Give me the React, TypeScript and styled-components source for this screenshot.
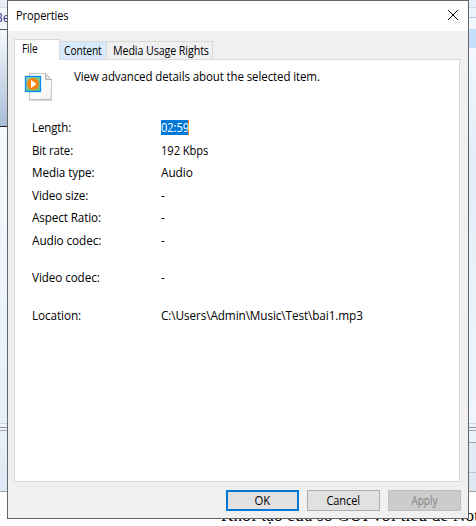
import React from "react";
import styled, { createGlobalStyle } from "styled-components";

const Global = createGlobalStyle`
  *{box-sizing:border-box}
  html,body{margin:0;padding:0}
  body{width:476px;height:526px;overflow:hidden;background:#fff;font-family:"Open Sans","Segoe UI",sans-serif;color:#000}
`;
const Screen = styled.main`position:relative;width:476px;height:526px;overflow:hidden;`;
const Desktop = styled.div`
  display:grid;grid-template-columns:238px 238px;height:492px;
`;
const BackWindow = styled.div`
  display:flex;flex-direction:column;height:492px;border-bottom:1px solid #a0a0a0;background:#f5f8fc;
`;
const Strip = styled.div<{ $h: number; $bg: string; $line?: string }>`
  flex:none;height:${p => p.$h}px;background:${p => p.$bg};
  border-bottom:${p => (p.$line ? `1px solid ${p.$line}` : "0")};
  font-size:12px;line-height:18px;color:#2d3287;white-space:nowrap;overflow:hidden;
`;
const Menu = styled.span`display:block;margin:1px 0 0 -5px;`;
const Doc = styled.div`
  height:34px;padding:14px 0 0 197px;display:flex;align-items:center;
  font:17px/20px "Liberation Serif",serif;white-space:nowrap;
`;
const DocLine = styled.span`margin-left:18px;letter-spacing:.29px;`;
const Dialog = styled.section`
  position:absolute;left:7px;top:0;width:462px;height:519px;background:#f0f0f0;
  border:1px solid #646464;display:flex;flex-direction:column;
`;
const TitleBar = styled.header`
  height:30px;flex:none;background:#fff;display:flex;justify-content:space-between;padding:0 9px 0 8px;
`;
const Label = styled.span<{ $sx?: number; $center?: boolean }>`
  display:block;font-size:12px;line-height:17px;letter-spacing:-.1px;white-space:nowrap;
  transform:scaleX(${p => p.$sx ?? 1});
  transform-origin:${p => (p.$center ? "center" : "left")};
`;
const Title = styled(Label)`margin-top:6px;`;
const Close = styled.button`
  border:0;background:none;padding:0;width:12px;height:12px;margin-top:8px;display:flex;
`;
const Tabs = styled.nav`
  display:flex;align-items:flex-end;height:28px;margin:0 8px 0 6px;flex:none;position:relative;z-index:1;
`;
const Tab = styled.button<{ $w: number; $kind: "active" | "hover" | "plain" }>`
  width:${p => p.$w}px;height:${p => (p.$kind === "active" ? 21 : 18)}px;
  padding:0 0 0 ${p => (p.$kind === "active" ? 7 : p.$kind === "hover" ? 4 : 6)}px;
  border:1px solid #d9d9d9;border-bottom:0;text-align:left;display:flex;
  border-left-width:${p => (p.$kind === "active" ? 1 : 0)}px;
  background:${p => ({ active: "#fff", hover: "#d8eaf9", plain: "#f0f0f0" })[p.$kind]};
  margin-bottom:${p => (p.$kind === "active" ? -1 : 0)}px;
  font-family:inherit;color:#000;
`;
const Panel = styled.div`
  margin:0 8px 0 6px;height:423px;width:446px;flex:none;border:1px solid #d9d9d9;background:#fff;padding:8px 0 0 9px;
`;
const Intro = styled.div`display:flex;height:51px;`;
const IntroText = styled(Label)`margin:0 0 0 20px;`;
const Details = styled.dl`
  margin:0;padding-left:8px;display:grid;grid-template-columns:129px 1fr;
  grid-template-rows:23px 22px 23px 22px 23px 37px 38px 20px;
`;
const Term = styled.dt`margin:0;display:flex;align-items:flex-start;`;
const Value = styled.dd`margin:0;display:flex;align-items:flex-start;`;
const Selection = styled.span`
  background:#0078d7;color:#fff;height:15px;margin-top:1px;border-right:1px solid #ff8728;width:28px;
`;
const SelectedText = styled(Label)`line-height:15px;`;
const Footer = styled.footer`display:flex;gap:8px;justify-content:flex-end;padding:8px 7px 0 0;`;
const Button = styled.button<{ $kind?: "default" | "disabled" }>`
  width:73px;height:21px;padding:0;font-family:inherit;display:flex;justify-content:center;align-items:center;
  border:${p => (p.$kind === "default" ? "2px solid #0078d7" : p.$kind ? "1px solid #bfbfbf" : "1px solid #adadad")};
  background:${p => (p.$kind === "disabled" ? "#ccc" : "#e1e1e1")};
  color:${p => (p.$kind === "disabled" ? "#838383" : "#000")};
`;

const MediaIcon = () => (
  <svg width="30" height="34" viewBox="0 0 30 34">
    <defs>
      <linearGradient id="page" x2="1" y2="1"><stop stopColor="#f3f3f3" /><stop offset=".5" stopColor="#fff" /><stop offset="1" stopColor="#eee" /></linearGradient>
      <linearGradient id="frame" x2="1" y2="1"><stop stopColor="#8fcf9c" /><stop offset="1" stopColor="#5fc180" /></linearGradient>
    </defs>
    <path d="M5.500 5.500h16l6 6v20h-22z" fill="url(#page)" stroke="#c8c8c8" />
    <path d="M5 32h23" stroke="#b4b4b4" />
    <path d="M21.500 5.500v6h6z" fill="#e4e4e4" stroke="#b5b5b5" />
    <rect x="1.500" y="8.500" width="15" height="15" fill="url(#frame)" stroke="#0a8bfa" strokeWidth="1.300" />
    <circle cx="9" cy="16" r="6" fill="#f9820f" />
    <path d="M7 12l5.500 4L7 20z" fill="#fff" />
  </svg>
);

/* label, value, label width factor, value width factor */
const rows: [string, string, number, number][] = [
  ["Length:", "02:59", 0.955, 0.93],
  ["Bit rate:", "192 Kbps", 0.955, 0.935],
  ["Media type:", "Audio", 0.975, 0.99],
  ["Video size:", "-", 0.975, 1],
  ["Aspect Ratio:", "-", 0.972, 1],
  ["Audio codec:", "-", 0.985, 1],
  ["Video codec:", "-", 0.975, 1],
  ["Location:", "C:\\Users\\Admin\\Music\\Test\\bai1.mp3", 0.98, 0.98],
];

export default function App() {
  return (
    <Screen>
      <Global />
      <Desktop>
        <BackWindow>
          <Strip $h={8} $bg="#e9eff9" $line="#d4dce8" />
          <Strip $h={22} $bg="#f3f7fc" $line="#505050"><Menu>Be</Menu></Strip>
          <Strip $h={97} $bg="linear-gradient(#f4f9fe,#a9bdd6)" $line="#222" />
          <Strip $h={297} $bg="linear-gradient(#f5f9fe,#e5eff9)" $line="#ccd6e3" />
          <Strip $h={4} $bg="#edf3fa" $line="#8c929c" />
          <Strip $h={3} $bg="#f0f4fa" $line="#a0a6b0" />
          <Strip $h={60} $bg="linear-gradient(#e8f0f9,#dce8f5)" />
        </BackWindow>
        <BackWindow>
          <Strip $h={8} $bg="#e9f0fa" $line="#ccdcf0" />
          <Strip $h={10} $bg="#edf4fc" $line="#b9cce4" />
          <Strip $h={11} $bg="#f2f7fd" />
          <Strip $h={19} $bg="#c2e0fb" />
          <Strip $h={376} $bg="linear-gradient(#f2f8fe,#e3edf8 30%,#f0f6fc)" $line="#ccd8e6" />
          <Strip $h={4} $bg="#edf3fa" $line="#8c929c" />
          <Strip $h={3} $bg="#f0f4fa" $line="#a0a6b0" />
          <Strip $h={12} $bg="#ebf1f8" $line="#a0a6b0" />
          <Strip $h={30} $bg="#e1eaf5" $line="#bac4d2" />
          <Strip $h={18} $bg="#dfe9f5" />
        </BackWindow>
      </Desktop>
      <Doc>•<DocLine>Khởi tạo cửa sổ GUI với tiêu đề Not</DocLine></Doc>
      <Dialog>
        <TitleBar>
          <Title $sx={0.92}>Properties</Title>
          <Close aria-label="Close"><svg width="12" height="12"><path d="M1 1l10 10M11 1L1 11" stroke="#000" /></svg></Close>
        </TitleBar>
        <Tabs>
          <Tab $w={46} $kind="active"><Label $sx={0.84}>File</Label></Tab>
          <Tab $w={47} $kind="hover"><Label $sx={0.855}>Content</Label></Tab>
          <Tab $w={106} $kind="plain"><Label $sx={0.89}>Media Usage Rights</Label></Tab>
        </Tabs>
        <Panel>
          <Intro><MediaIcon /><IntroText $sx={0.957}>View advanced details about the selected item.</IntroText></Intro>
          <Details>
            {rows.map(([k, v, a, b], i) => (
              <React.Fragment key={k}>
                <Term><Label $sx={a}>{k}</Label></Term>
                <Value>{i === 0 ? <Selection><SelectedText $sx={b}>{v}</SelectedText></Selection> : <Label $sx={b}>{v}</Label>}</Value>
              </React.Fragment>
            ))}
          </Details>
        </Panel>
        <Footer>
          <Button $kind="default"><Label $center $sx={0.94}>OK</Label></Button>
          <Button><Label $center $sx={0.92}>Cancel</Label></Button>
          <Button $kind="disabled" disabled><Label $center $sx={0.84}>Apply</Label></Button>
        </Footer>
      </Dialog>
    </Screen>
  );
}
